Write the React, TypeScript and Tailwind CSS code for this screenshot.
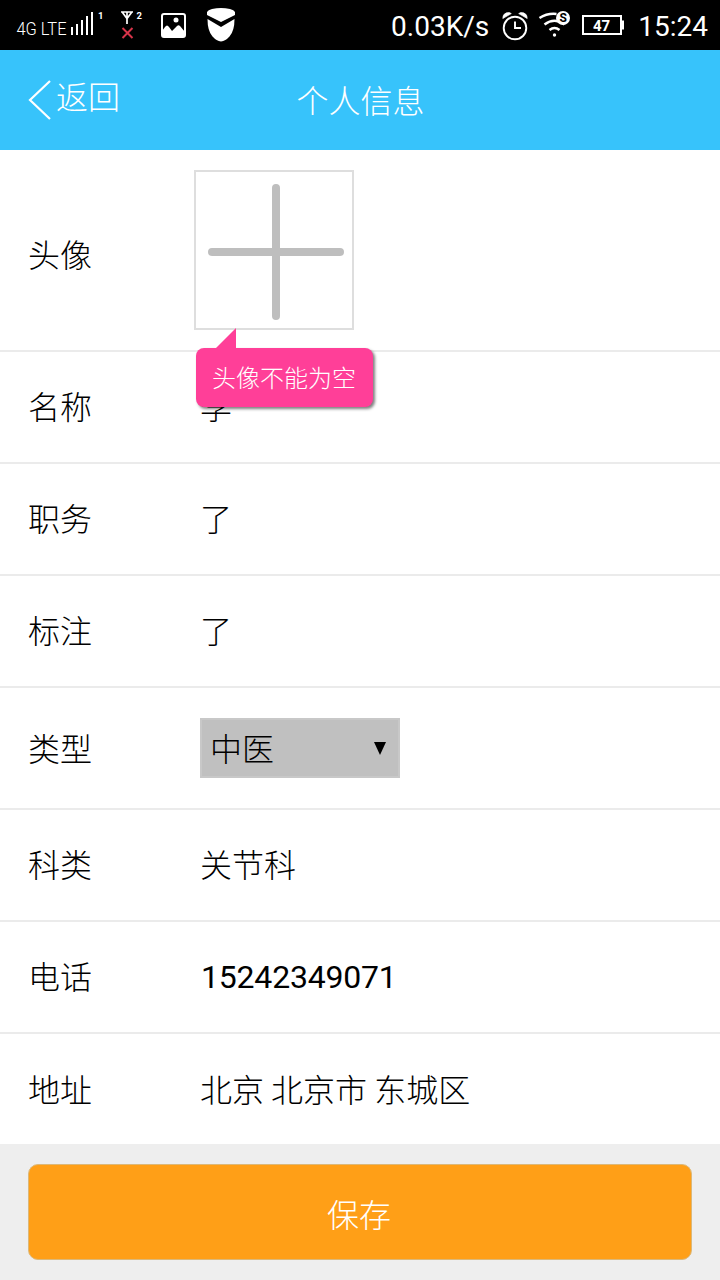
import type { ReactNode } from "react";

function StatusBar() {
  return (
    <div className="flex h-[50px] items-center bg-black font-['Roboto',sans-serif] font-normal text-white">
      <svg className="h-[50px] w-[250px]" viewBox="0 0 250 50" fill="none">
        <text x="16.5" y="35" fontSize="18" fontWeight="300" fill="#fff" textLength="50" lengthAdjust="spacingAndGlyphs">
          4G LTE
        </text>
        <g fill="#fff">
          <rect x="71" y="27" width="2" height="8" />
          <rect x="76" y="24" width="2" height="11" />
          <rect x="81" y="20" width="2" height="15" />
          <rect x="86" y="16" width="2" height="19" />
          <rect x="91" y="12" width="2" height="23" />
        </g>
        <text x="98" y="19" fontSize="9.5" fontWeight="700" fill="#fff">1</text>
        <path d="M121 12h12M122.500 12.500l4.500 6 4.500-6M127 12v12" stroke="#fff" strokeWidth="1.700" />
        <path d="M122.500 28l10 10M132.500 28l-10 10" stroke="#d8344a" strokeWidth="2" />
        <text x="136.500" y="19" fontSize="9.5" fontWeight="700" fill="#fff">2</text>
        <rect x="162" y="14" width="23" height="23" rx="2" stroke="#fff" strokeWidth="2" />
        <path d="M162 31l3-4q2-3 4 0l3 4 5-5q1.500-1.500 3 0l5 6v5h-23z" fill="#fff" />
        <circle cx="176" cy="20" r="2.500" fill="#fff" />
        <path d="M207 12q1-2 5-3 9-2 18 0 4 1 5 3v3l-14 7-14-7z" fill="#fff" />
        <path d="M207.500 19l13.500 8 13.500-8q0 12-5 17.500-4 4.500-8.500 5-4.500-.5-8.500-5-5-5.500-5-17.500z" fill="#fff" />
      </svg>
      <div className="ml-auto mr-[12px] flex h-[50px] items-center">
        <span className="pt-[3px] text-[28px] leading-8">0.03K/s</span>
        <svg className="ml-[11px] h-[50px] w-[140px]" viewBox="500 0 140 50" fill="none" stroke="#fff">
          <circle cx="515" cy="28" r="11.300" strokeWidth="1.900" />
          <path d="M515 21.500v6.500h6" strokeWidth="1.900" />
          <path d="M502.800 18.500q0-6 6.500-5.900l2 1zM527.200 18.500q0-6-6.500-5.900l-2 1z" fill="#fff" strokeWidth=".7" />
          <path d="M539.500 18q8-5 17-4" strokeWidth="2.500" />
          <path d="M544.500 24.500q10-7.500 20 0" strokeWidth="2.500" />
          <path d="M549.500 30q5-4 10 0" strokeWidth="2.500" />
          <circle cx="554.500" cy="35" r="1.700" fill="#fff" stroke="none" />
          <circle cx="563" cy="18" r="7" fill="#fff" stroke="none" />
          <text x="559.500" y="22.300" fontSize="12" fontWeight="700" fill="#000" stroke="none">S</text>
          <rect x="583" y="16" width="38" height="18" strokeWidth="2" />
          <rect x="622" y="20.500" width="2" height="9" fill="#fff" stroke="none" />
          <text x="593" y="30.500" fontSize="15" fontWeight="700" fill="#fff" stroke="none">47</text>
        </svg>
        <span className="-ml-[2px] pt-[3px] text-[28px] leading-8">15:24</span>
      </div>
    </div>
  );
}

function Header() {
  return (
    <header className="grid h-[100px] grid-cols-[1fr_auto_1fr] items-center bg-[#37c3fb] text-[32px] leading-8 text-white">
      <button className="flex items-center pl-[28px]">
        <svg className="h-[42px] w-[28px]" viewBox="0 0 28 42" fill="none" stroke="currentColor" strokeWidth="2.200">
          <path d="M22 2L2 21l20 19" />
        </svg>
        <span className="-mt-[10px]">返回</span>
      </button>
      <h1 className="pb-[3px] pl-px">个人信息</h1>
    </header>
  );
}

interface RowProps {
  label: string;
  size?: string;
  border?: string;
  offset?: string;
  children: ReactNode;
}

function Row({ label, size = "h-[112px]", border = "border-b-2", offset = "pb-[5px]", children }: RowProps) {
  return (
    <div className={`flex items-center border-[#ebebeb] pl-[28px] ${border} ${size}`}>
      <div className={`w-[172px] shrink-0 ${offset}`}>{label}</div>
      {typeof children === "string" ? <div className={offset}>{children}</div> : children}
    </div>
  );
}

function AvatarPicker() {
  return (
    <div className="relative -ml-[6px] h-[160px] w-[160px] border-2 border-[#dedede]">
      <svg className="h-full w-full" viewBox="0 0 156 156" stroke="#bebebe" strokeWidth="8" strokeLinecap="round">
        <path d="M80 16v128M16 80h128" />
      </svg>
      <div className="absolute left-0 top-[176px] z-10 flex h-[59px] w-[177px] items-center justify-center rounded-lg bg-[#ff3f98] pb-px pr-px text-[24px] leading-6 text-white shadow-[2px_2px_3px_rgba(0,0,0,0.5)]">
        <svg className="absolute -top-[20px] left-[20px] h-[21px] w-[20px]" viewBox="0 0 20 21">
          <path d="M20 0v21H0v-1z" fill="#ff3f98" />
        </svg>
        头像不能为空
      </div>
    </div>
  );
}

export default function App() {
  return (
    <div className="flex h-[1280px] w-[720px] flex-col overflow-hidden bg-[#eee] font-['Noto_Sans_CJK_SC',sans-serif] font-light">
      <StatusBar />
      <Header />
      <main className="bg-white text-[32px] leading-8 text-black">
        <Row label="头像" size="h-[202px]" offset="pt-[6px]">
          <AvatarPicker />
        </Row>
        <Row label="名称">李</Row>
        <Row label="职务">了</Row>
        <Row label="标注">了</Row>
        <Row label="类型" size="h-[122px]" offset="pb-[3px]">
          <button className="flex h-[60px] w-[200px] items-center justify-between border-2 border-[#c8c8c8] bg-[#c0c0c0] pl-[8px] pr-[12px]">
            <span className="pb-[2px]">中医</span>
            <svg className="h-[13px] w-[12px]" viewBox="0 0 12 13">
              <path d="M0 0h12L6 13z" />
            </svg>
          </button>
        </Row>
        <Row label="科类">关节科</Row>
        <Row label="电话">
          <span className="pl-px font-['Roboto',sans-serif] font-normal tracking-[-0.2px]">15242349071</span>
        </Row>
        <Row label="地址" size="h-[110px]" border="border-b-0" offset="pb-[3px]">
          北京 北京市 东城区
        </Row>
      </main>
      <div className="px-[28px] pt-[20px]">
        <button className="flex h-[96px] w-full items-center justify-center rounded-[10px] border border-[#dcb878] bg-[#ff9f17] pr-[2px] pt-px text-[32px] leading-8 text-white">
          保存
        </button>
      </div>
    </div>
  );
}
